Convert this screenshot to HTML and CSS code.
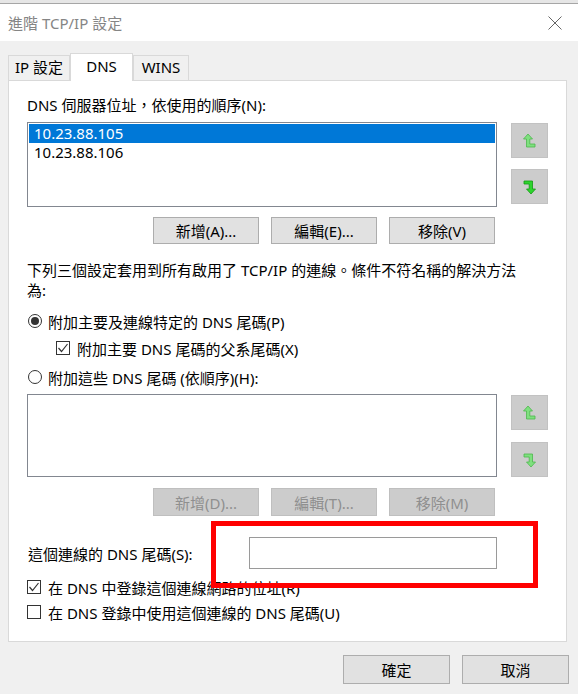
FILE: index.html
```html
<!DOCTYPE html>
<html lang="zh-Hant">
<head>
    <meta charset="UTF-8">
    <meta name="viewport" content="width=device-width, initial-scale=1.0">
    <title>進階 TCP/IP 設定</title>
    <link rel="stylesheet" href="styles.css">
</head>
<body>
    <div class="topbar"></div>
    <div class="titlebar">
        <span class="title">進階 TCP/IP 設定</span>
        <svg class="close" width="14" height="14" viewBox="0 0 14 14"><path d="M0.5 0.5 L13.5 13.5 M13.5 0.5 L0.5 13.5" stroke="#666" stroke-width="1" fill="none"/></svg>
    </div>

    <div class="dialog">
        <div class="tabs">
            <div class="tab tab-ip">IP 設定</div>
            <div class="tab tab-dns active">DNS</div>
            <div class="tab tab-wins">WINS</div>
        </div>

        <div class="panel">
            <div class="label">DNS 伺服器位址，依使用的順序(N):</div>
            <div class="list-row">
                <div class="listbox">
                    <div class="item selected">10.23.88.105</div>
                    <div class="item">10.23.88.106</div>
                </div>
                <div class="arrows">
                    <div class="arrow-btn">
                        <svg width="16" height="16" viewBox="0 0 16 16"><path class="arr-dim" d="M6 1 L10.5 6 L7.8 6 L7.8 11 L13 11 L13 14 L4.5 14 L4.5 6 L1.5 6 Z"/></svg>
                    </div>
                    <div class="arrow-btn">
                        <svg width="16" height="16" viewBox="0 0 16 16"><path class="arr-on" d="M2 2 L10.5 2 L10.5 10 L13.5 10 L9 15 L4.5 10 L7.2 10 L7.2 5 L2 5 Z"/></svg>
                    </div>
                </div>
            </div>
            <div class="btn-row">
                <button class="btn">新增(A)...</button>
                <button class="btn">編輯(E)...</button>
                <button class="btn">移除(V)</button>
            </div>

            <div class="desc">下列三個設定套用到所有啟用了 TCP/IP 的連線。條件不符名稱的解決方法<br>為:</div>

            <div class="option opt-first">
                <span class="radio checked"></span>附加主要及連線特定的 DNS 尾碼(P)
            </div>
            <div class="option opt-sub">
                <span class="check"><svg width="12" height="12" viewBox="0 0 12 12"><path d="M1.5 6 L4.5 9.5 L10.5 2" stroke="#333" stroke-width="1.2" fill="none"/></svg></span>附加主要 DNS 尾碼的父系尾碼(X)
            </div>
            <div class="option opt-second">
                <span class="radio"></span>附加這些 DNS 尾碼 (依順序)(H):
            </div>

            <div class="list-row list-row2">
                <div class="listbox"></div>
                <div class="arrows">
                    <div class="arrow-btn">
                        <svg width="16" height="16" viewBox="0 0 16 16"><path class="arr-dim" d="M6 1 L10.5 6 L7.8 6 L7.8 11 L13 11 L13 14 L4.5 14 L4.5 6 L1.5 6 Z"/></svg>
                    </div>
                    <div class="arrow-btn">
                        <svg width="16" height="16" viewBox="0 0 16 16"><path class="arr-dim" d="M2 2 L10.5 2 L10.5 10 L13.5 10 L9 15 L4.5 10 L7.2 10 L7.2 5 L2 5 Z"/></svg>
                    </div>
                </div>
            </div>
            <div class="btn-row btn-row2">
                <button class="btn" disabled>新增(D)...</button>
                <button class="btn" disabled>編輯(T)...</button>
                <button class="btn" disabled>移除(M)</button>
            </div>

            <div class="suffix-row">
                <span class="suffix-label">這個連線的 DNS 尾碼(S):</span>
                <div class="textbox"></div>
            </div>
            <div class="option opt-reg">
                <span class="check"><svg width="12" height="12" viewBox="0 0 12 12"><path d="M1.5 6 L4.5 9.5 L10.5 2" stroke="#333" stroke-width="1.2" fill="none"/></svg></span>在 DNS 中登錄這個連線網路的位址(R)
            </div>
            <div class="option opt-use">
                <span class="check"></span>在 DNS 登錄中使用這個連線的 DNS 尾碼(U)
            </div>
        </div>

        <div class="actions">
            <button class="btn">確定</button>
            <button class="btn">取消</button>
        </div>
    </div>

    <div class="highlight"></div>
</body>
</html>
```

FILE: styles.css
```css
body {
    margin: 0;
    width: 578px;
    height: 694px;
    overflow: hidden;
    background: #f0f0f0;
    font-family: "Noto Sans", "Noto Sans CJK TC", sans-serif;
    font-size: 15px;
    color: #000;
    position: relative;
}
.topbar { height: 3px; background: #e6e6e6; border-bottom: 1px solid #a6a6a6; }
.titlebar {
    height: 37px;
    background: #fff;
    display: flex;
    align-items: center;
    justify-content: space-between;
    padding: 0 16px 0 8px;
}
.title { color: #858585; font-size: 15px; }
.close { display: block; }

.dialog { padding: 12px 11px 0 8px; }
.tabs { display: flex; align-items: flex-end; height: 27px; }
.tab {
    box-sizing: border-box;
    height: 25px;
    line-height: 23px;
    text-align: center;
    background: #f0f0f0;
    border: 1px solid #d9d9d9;
    border-bottom: none;
}
.tab-ip { width: 62px; }
.tab-dns { width: 63px; }
.tab-wins { width: 56px; }
.tab.active {
    height: 28px;
    line-height: 24px;
    background: #fff;
    margin-bottom: -1px;
    position: relative;
    z-index: 1;
}

.panel {
    box-sizing: border-box;
    width: 559px;
    height: 562px;
    background: #fff;
    border: 1px solid #d9d9d9;
    padding: 14px 0 0 18px;
}
.label { line-height: 20px; }

.list-row { display: flex; margin-top: 7px; height: 85px; }
.listbox {
    box-sizing: border-box;
    width: 470px;
    height: 100%;
    border: 1px solid #828790;
    padding: 1px;
}
.item { height: 19px; line-height: 19px; font-size: 15px; padding-left: 5px; }
.item.selected { background: #0078d7; color: #fff; }
.arrows { display: flex; flex-direction: column; gap: 11px; margin-left: 14px; padding-top: 1px; }
.arrow-btn {
    box-sizing: border-box;
    width: 37px;
    height: 35px;
    background: #cccccc;
    border: 1px solid #c2c2c2;
    display: flex;
    align-items: center;
    justify-content: center;
}
.arr-on { fill: #2ed42e; stroke: #139a13; stroke-width: 0.8; }
.arr-dim { fill: #7fe07f; stroke: #4cb84c; stroke-width: 0.8; }

.btn-row { display: flex; justify-content: flex-end; gap: 12px; width: 470px; padding-right: 2px; box-sizing: border-box; margin-top: 10px; }
.btn {
    width: 106px;
    height: 27px;
    padding: 0;
    font-family: inherit;
    font-size: 15px;
    color: #000;
    background: #e1e1e1;
    border: 1px solid #adadad;
    border-radius: 0;
}
.btn:disabled { background: #cccccc; border-color: #bfbfbf; color: #8f8f8f; }

.desc { margin-top: 16px; line-height: 20px; white-space: nowrap; }

.option { display: flex; align-items: center; height: 20px; white-space: nowrap; }
.radio {
    box-sizing: border-box;
    width: 14px;
    height: 14px;
    border: 1px solid #333;
    border-radius: 50%;
    margin: 0 6px 0 1px;
    display: flex;
    align-items: center;
    justify-content: center;
}
.radio.checked::after { content: ""; width: 8px; height: 8px; border-radius: 50%; background: #333; }
.check {
    box-sizing: border-box;
    width: 14px;
    height: 14px;
    border: 1px solid #333;
    margin-right: 7px;
    display: flex;
    align-items: center;
    justify-content: center;
}
.opt-first { margin-top: 11px; }
.opt-sub { margin-top: 7px; padding-left: 29px; }
.opt-second { margin-top: 9px; }

.list-row2 { height: 83px; }
.list-row2 .arrows { gap: 12px; }
.btn-row2 { margin-top: 11px; }
.btn-row2 .btn { height: 28px; }

.suffix-row { display: flex; align-items: center; margin-top: 21px; }
.suffix-label { width: 222px; padding-left: 1px; box-sizing: border-box; }
.textbox { box-sizing: border-box; width: 248px; height: 32px; border: 1px solid #9a9a9a; }
.opt-reg { margin-top: 8px; }
.opt-use { margin-top: 5px; }

.actions { display: flex; justify-content: flex-end; gap: 12px; margin-top: 13px; margin-right: -2px; }
.actions .btn { width: 107px; height: 29px; }

.highlight {
    position: absolute;
    left: 211px;
    top: 521px;
    width: 327px;
    height: 67px;
    box-sizing: border-box;
    border: 5px solid #ff0000;
}
```
